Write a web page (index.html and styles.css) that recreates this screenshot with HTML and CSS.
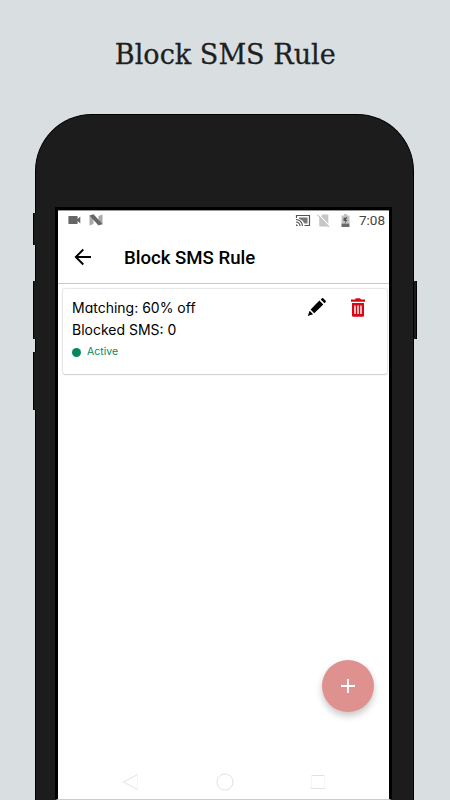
FILE: index.html
```
<!DOCTYPE html>
<html lang="en">
<head>
    <meta charset="UTF-8" />
    <meta name="viewport" content="width=device-width, initial-scale=1.0" />
    <title>Block SMS Rule</title>
    <link rel="stylesheet" href="styles.css">
</head>
<body>
    <h1 class="page-title"><span>Block SMS Rule</span></h1>

    <div class="phone">
        <!-- Hardware buttons -->
        <span class="side-button mute"></span>
        <span class="side-button volume-up"></span>
        <span class="side-button volume-down"></span>
        <span class="side-button power"></span>

        <div class="screen">
            <!-- Android status bar -->
            <div class="status-bar">
                <svg class="icon-video" width="13" height="10" viewBox="0 0 13 10">
                    <path d="M1 1h8q.6 0 .6.6V4L12.3 1.600v6.8L9.600 6v2.400q0 .6-.6.6H1q-.6 0-.6-.6V1.600Q.4 1 1 1z" fill="#666" />
                </svg>
                <svg class="icon-n" width="14" height="12" viewBox="0 0 14 12">
                    <path d="M.5 1.500 4.500 3v7L.5 11.500zM9.500 2l4-1.500V11l-4-2z" fill="#aaa" />
                    <path d="M.5 1.500 4.500.3l9 9.700-4 1.500z" fill="#666" />
                </svg>
                <div class="status-right">
                    <svg width="16" height="13" viewBox="0 0 16 13">
                        <path d="M1.500 4V1.500h13v10H9.500" fill="none" stroke="#555" stroke-width="1.200" />
                        <path d="M4 3.500h8.500v6H9.500Q8 6 4 4.800z" fill="#777" />
                        <path d="M1 5.500a6.500 6.500 0 0 1 6.500 6.500M1 8a4 4 0 0 1 4 4" fill="none" stroke="#555" stroke-width="1.200" />
                        <path d="M1 10.200A2 2 0 0 1 2.800 12H1z" fill="#555" />
                    </svg>
                    <svg class="icon-sim" width="13" height="13" viewBox="0 0 13 13">
                        <path d="M5.500.5h5q.8 0 .8.8v10.400q0 .8-.8.8h-7.500q-.8 0-.8-.8V4z" fill="#c6c6c6" />
                        <path d="m1.500.5 11 11.500" stroke="#fff" stroke-width="1.500" />
                        <path d="m.5.8 11.500 12" stroke="#c2c2c2" stroke-width="1.200" />
                    </svg>
                    <svg class="icon-battery" width="9" height="13" viewBox="0 0 9 13">
                        <path d="M3 0h3v1.500h2.500v8h-8v-8H3z" fill="#c2c2c2" />
                        <path d="M.5 9.500h8V13h-8z" fill="#6b6b6b" />
                        <path d="M6.500 3 2.500 4v3h2L3.500 10l3-4.300H4.800z" fill="#555" />
                    </svg>
                    <span class="clock">7:08</span>
                </div>
            </div>

            <!-- App bar -->
            <header class="app-bar">
                <svg width="18" height="18" viewBox="0 0 18 18" fill="none" stroke="#000" stroke-width="1.900">
                    <path d="M17 9H2M9.300 1.500 1.800 9l7.500 7.500" />
                </svg>
                <h2>Block SMS Rule</h2>
            </header>

            <main>
                <div class="rule-card">
                    <div class="rule-info">
                        <p class="rule-matching">Matching: 60% off</p>
                        <p class="rule-blocked">Blocked SMS: 0</p>
                        <p class="rule-state">Active</p>
                    </div>
                    <div class="rule-actions">
                        <svg width="20" height="20" viewBox="0 0 20 20">
                            <path d="M12.400 3.600 16.300 7.500 7.200 16.200 3.600 12.600zM13.700 2.500 14.700 1.500q.9-.9 1.800 0l2 2q.9.9 0 1.800l-1 1zM2.600 13.700 6.100 17.200.8 19z" />
                        </svg>
                        <svg class="icon-trash" width="14" height="19" viewBox="0 0 14 19">
                            <path d="M0 1.500h4L5 .3h4l1 1.200h4v2.200H0zM1 5h12v12.500q0 1.200-1.200 1.200H2.200Q1 18.700 1 17.500z" fill="#d90816" />
                            <path d="M4 7.500v8.500M7 7.500v8.500M10 7.500v8.500" stroke="#fff" stroke-width="1.400" />
                        </svg>
                    </div>
                </div>
            </main>

            <button class="fab" aria-label="Add rule">
                <svg width="14" height="14" viewBox="0 0 14 14">
                    <path d="M7 0v14M0 7h14" stroke="#fff" stroke-width="1.900" />
                </svg>
            </button>

            <!-- Navigation bar -->
            <nav class="nav-bar">
                <svg width="18" height="18" viewBox="0 0 18 18">
                    <path d="M15.500 1.500 1.500 9l14 7.500" />
                    <path d="M15.500 2v14" opacity=".35" />
                </svg>
                <svg width="18" height="18" viewBox="0 0 18 18">
                    <circle cx="9" cy="9" r="8" />
                </svg>
                <svg width="18" height="18" viewBox="0 0 18 18">
                    <path d="M2.500 2.500h13M1.500 15.500h15" />
                    <path d="M2.500 3v12M15.500 3v12" opacity=".35" />
                </svg>
            </nav>
        </div>
    </div>
</body>
</html>
```
FILE: styles.css
```
/* === Reset === */
* {
    box-sizing: border-box;
}

body, h1, h2, p {
    margin: 0;
    padding: 0;
}

svg {
    display: block;
    flex: none;
}

body {
    height: 800px;
    overflow: hidden;
    display: flex;
    flex-direction: column;
    background: #d9dfe1;
    font-family: Inter, sans-serif;
    color: #000;
}

.page-title {
    height: 114px;
    padding-top: 37px;
    text-align: center;
    font: 400 28.500px/36px "DejaVu Serif", serif;
    color: #211e1e;
    white-space: nowrap;
    -webkit-text-stroke: 0.3px #211e1e;
}

    .page-title span {
        display: inline-block;
        transform: scaleX(0.95);
    }

/* === Phone frame === */
.phone {
    position: relative;
    flex: 1;
    width: 379px;
    margin-left: 35px;
    padding: 92px 21px 0 19px;
    display: flex;
    background: #1c1c1c;
    border: 1px solid #000;
    border-bottom: 0;
    border-radius: 57px 57px 0 0;
}

.side-button {
    position: absolute;
    left: -3px;
    width: 3px;
    height: 58px;
    background: #1c1c1c;
    border-left: 1px solid #000;
}

.mute {
    top: 98px;
    height: 32px;
}

.volume-up {
    top: 166px;
}

.volume-down {
    top: 237px;
}

.power {
    top: 166px;
    left: auto;
    right: -4px;
    border-left: 0;
    border-right: 1px solid #000;
}

.screen {
    position: relative;
    flex: 1;
    display: flex;
    flex-direction: column;
    background: #fff;
    border: 3px solid #000;
    border-bottom: 1px solid #ccc;
}

/* === Status bar === */
.status-bar {
    height: 21px;
    padding: 0 4px 2px 10px;
    display: flex;
    align-items: center;
    border-top: 1px solid #999;
}

.icon-n {
    margin-left: 8px;
}

.status-right {
    margin-left: auto;
    display: flex;
    align-items: center;
}

.icon-sim {
    margin-left: 6px;
}

.icon-battery {
    margin-left: 11px;
}

.clock {
    margin-left: 9px;
    font: 400 13.500px/17px Roboto, sans-serif;
    color: #444;
}

/* === App bar === */
.app-bar {
    height: 53px;
    padding-left: 16px;
    display: flex;
    align-items: center;
    border-bottom: 1px solid #c8c8c8;
}

    .app-bar h2 {
        margin-left: 32px;
        padding-top: 2px;
        font: 500 18.600px/24px Roboto, sans-serif;
    }

/* === Rule card === */
main {
    flex: 1;
    padding: 5px 2px 0 5px;
}

.rule-card {
    height: 85px;
    padding: 8px 22px 0 9px;
    display: flex;
    justify-content: space-between;
    border-radius: 2px;
    box-shadow: 0 0 2px rgba(0, 0, 0, 0.35), 0 1px 1px rgba(0, 0, 0, 0.1);
}

.rule-info p {
    font-size: 14px;
    line-height: 22px;
    font-feature-settings: "cv11", "ss03";
    white-space: nowrap;
}

.rule-info .rule-state {
    display: flex;
    align-items: center;
    gap: 6px;
    font-size: 10.500px;
    color: #078761;
}

.rule-state::before {
    content: "";
    width: 9px;
    height: 9px;
    border-radius: 50%;
    background: #078761;
}

.rule-actions {
    display: flex;
    align-items: flex-start;
    gap: 24px;
}

.icon-trash {
    margin-top: 1px;
}

/* === Floating button === */
.fab {
    position: absolute;
    right: 15px;
    bottom: 87px;
    width: 52px;
    height: 52px;
    padding: 0;
    display: grid;
    place-items: center;
    border: 0;
    border-radius: 50%;
    background: #df9190;
    box-shadow: 0 4px 7px rgba(0, 0, 0, 0.22);
}

/* === Navigation bar === */
.nav-bar {
    height: 35px;
    padding: 0 62px 0 64px;
    display: flex;
    justify-content: space-between;
    align-items: center;
}

    .nav-bar svg {
        fill: none;
        stroke: #e2e2e2;
    }
```
